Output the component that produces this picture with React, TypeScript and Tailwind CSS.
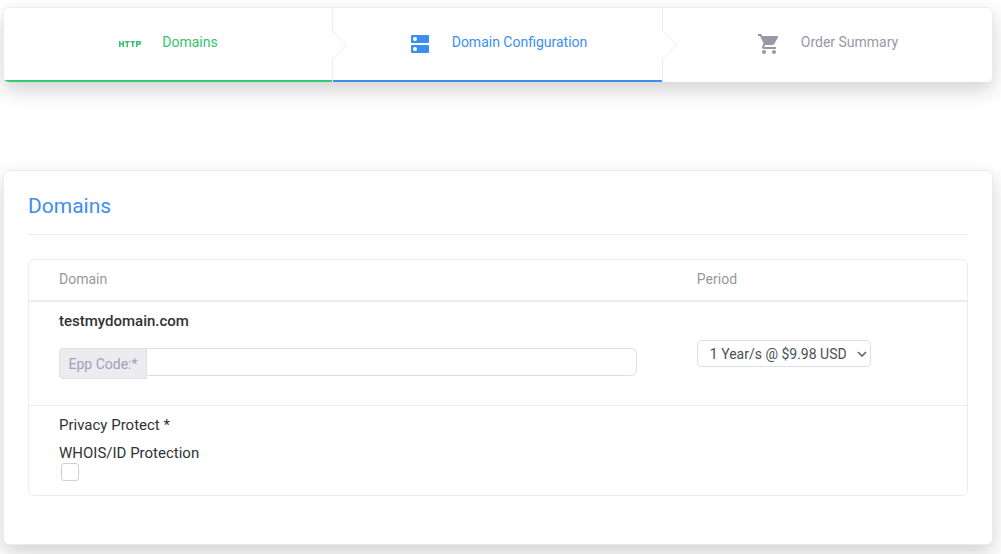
import { MdDns, MdHttp, MdShoppingCart } from 'react-icons/md';
import type { IconType } from 'react-icons';

interface Step {
  label: string;
  icon: IconType;
  style: string;
}

const steps: Step[] = [
  { label: 'Domains', icon: MdHttp, style: 'text-[#36c26e] border-b-[#36c96f]' },
  { label: 'Domain Configuration', icon: MdDns, style: 'text-[#3c8fee] border-b-[#3c8fee]' },
  { label: 'Order Summary', icon: MdShoppingCart, style: 'text-[#9799a6] border-b-transparent' },
];

function StepArrow() {
  return (
    <svg
      className="absolute top-1/2 -right-4 z-10 -translate-y-1/2"
      width="16"
      height="30"
      viewBox="0 0 16 30"
      fill="none"
    >
      <path d="M0 1h1l14 14-14 14H0z" fill="#fff" />
      <path d="M.5 1l14 14-14 14" stroke="#ebecee" />
    </svg>
  );
}

function StepBar() {
  return (
    <nav className="overflow-hidden rounded-md bg-white shadow-[0_8px_20px_rgba(0,0,0,0.18)]">
      <ol className="grid grid-cols-3">
        {steps.map(({ label, icon: Icon, style }, index) => (
          <li
            key={label}
            className="relative border-t border-r border-[#ebecee] first:rounded-l-md first:border-l last:rounded-r-md"
          >
            <a
              href="#"
              className={`flex h-[74px] items-center justify-center gap-5 border-b-2 text-sm ${style}`}
            >
              <Icon size={24} />
              <span className="pb-1">{label}</span>
            </a>
            {index < steps.length - 1 && <StepArrow />}
          </li>
        ))}
      </ol>
    </nav>
  );
}

function PeriodSelect() {
  return (
    <div className="relative w-[174px]">
      <select
        aria-label="Period"
        className="block h-[27px] w-full appearance-none rounded-[5px] border border-[#dddfe7] bg-white pr-6 pl-3 text-[#495057]"
      >
        <option>1 Year/s @ $9.98 USD</option>
      </select>
      <svg
        className="pointer-events-none absolute top-1/2 right-1 -translate-y-1/2"
        width="10"
        height="6"
        viewBox="0 0 10 6"
        fill="none"
      >
        <path d="M1 1l4 4 4-4" stroke="#5f6368" strokeWidth="1.6" />
      </svg>
    </div>
  );
}

function DomainsTable() {
  return (
    <div className="rounded-md border border-[#ebecee]">
      <table className="w-full table-fixed border-separate border-spacing-0 text-left text-sm leading-5">
        <thead>
          <tr className="text-[#97989c]">
            <th className="w-[68%] border-b-2 border-[#ebebf1] px-[30px] pt-[9px] pb-[11px] font-normal">
              Domain
            </th>
            <th className="border-b-2 border-[#ebebf1] px-[30px] pt-[9px] pb-[11px] font-normal">
              Period
            </th>
          </tr>
        </thead>
        <tbody>
          <tr>
            <td className="border-b border-[#ebecee] px-[30px] pt-[9px] pb-[26px]">
              <strong className="block text-[15px] leading-5 font-medium">testmydomain.com</strong>
              <div className="mt-[17px] flex items-start">
                <label
                  htmlFor="epp-code"
                  className="flex h-[31px] w-[88px] items-center justify-center rounded-l border border-[#dddfe7] bg-[#ebebf0] text-[#a0a3b5]"
                >
                  Epp Code:*
                </label>
                <input
                  id="epp-code"
                  type="text"
                  className="h-7 min-w-0 flex-1 rounded-r-md border border-l-0 border-[#dddfe7] px-2 outline-none"
                />
              </div>
            </td>
            <td className="border-b border-[#ebecee] px-[30px] align-middle">
              <PeriodSelect />
            </td>
          </tr>
          <tr>
            <td colSpan={2} className="px-[30px] pt-[9px] pb-3.5 text-[15px] leading-5">
              <p className="mb-2">Privacy Protect *</p>
              <label htmlFor="whois" className="block">
                WHOIS/ID Protection
              </label>
              <input
                id="whois"
                type="checkbox"
                className="ml-0.5 block size-[18px] appearance-none rounded-[3px] border border-[#cdd1dc] bg-white checked:bg-[#3c8fee]"
              />
            </td>
          </tr>
        </tbody>
      </table>
    </div>
  );
}

export default function App() {
  return (
    <main className="bg-white pt-[7px] pr-2 pb-[9px] pl-[3px] font-[Roboto,sans-serif] text-[#2f3238]">
      <StepBar />
      <section className="mt-22 rounded-md border border-[#ebecee] bg-white px-6 pt-5 pb-12 shadow-[0_8px_20px_rgba(0,0,0,0.18)]">
        <h1 className="mb-6 border-b border-[#ebecee] pb-[13px] text-[21px] leading-[30px] text-[#3c8fee]">
          Domains
        </h1>
        <DomainsTable />
      </section>
    </main>
  );
}
